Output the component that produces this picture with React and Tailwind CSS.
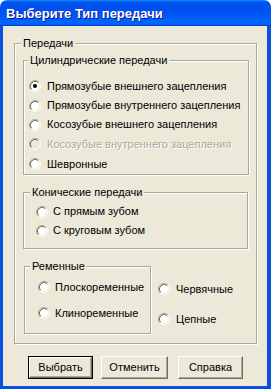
const FONT = "font-['Liberation_Sans',Arial,sans-serif]";

function Radio({ checked, disabled }) {
  return (
    <svg width="12" height="12" viewBox="0 0 12 12" className="shrink-0">
      <circle cx="6" cy="6" r="4.5" fill={disabled ? '#ECE9D8' : '#fff'} />
      <path d="M2.11 9.89 A5.5 5.5 0 0 1 9.89 2.11" fill="none" stroke="#ACA899" />
      <path d="M9.89 2.11 A5.5 5.5 0 0 1 2.11 9.89" fill="none" stroke="#fff" />
      <path d="M2.82 9.18 A4.5 4.5 0 0 1 9.18 2.82" fill="none" stroke="#716F64" />
      <path d="M9.18 2.82 A4.5 4.5 0 0 1 2.82 9.18" fill="none" stroke="#F1EFE2" />
      {checked && <circle cx="6" cy="6" r="2" fill="#000" />}
    </svg>
  );
}

function Option({ label, checked, disabled, gap = 'gap-[6px]', h = 'h-[20px]' }) {
  return (
    <div className={`flex items-center ${gap} ${h}`}>
      <Radio checked={checked} disabled={disabled} />
      <span className={`whitespace-nowrap ${disabled ? 'text-[#ACA899] [text-shadow:1px_1px_0_#fff]' : 'text-black'}`}>
        {label}
      </span>
    </div>
  );
}

function Group({ label, labelLeft, className, children }) {
  return (
    <div className={`relative border border-[#ACA899] shadow-[inset_1px_1px_0_#fff,1px_1px_0_#fff] ${className}`}>
      <span className={`absolute -top-[7px] ${labelLeft} bg-[#ECE9D8] px-[2px] leading-[13px] whitespace-nowrap`}>
        {label}
      </span>
      {children}
    </div>
  );
}

function Button({ label, isDefault, className }) {
  const inner = (
    <div className="flex h-full w-full items-center justify-center border border-t-white border-l-white border-r-[#716F64] border-b-[#716F64] bg-[#ECE9D8] shadow-[inset_-1px_-1px_0_#ACA899]">
      {label}
    </div>
  );
  if (isDefault) {
    return <div className={`h-[23px] border border-black ${className}`}>{inner}</div>;
  }
  return <div className={`h-[23px] ${className}`}>{inner}</div>;
}

export default function App() {
  return (
    <div className={`flex h-[389px] w-[271px] flex-col bg-white text-[11px] ${FONT}`}>
      {/* Заголовок */}
      <div className="flex h-[26px] shrink-0 items-center rounded-t-[7px] bg-[linear-gradient(180deg,#0997ff,#0053ee_8%,#0050ee_40%,#06f_88%,#06f_93%,#005bff_95%,#003dd7_96%,#003dd7)] pl-[6px] pt-[1px]">
        <span className="text-[13px] font-bold text-white [text-shadow:1px_1px_#0f1089]">Выберите Тип передачи</span>
      </div>

      {/* Тело окна */}
      <div className="flex flex-1 flex-col border-x-[3px] border-b-[3px] border-[#0a4fe0] border-r-4 bg-[#ECE9D8]">
        <Group label="Передачи" labelLeft="left-[6px]" className="ml-[11px] mt-[17px] h-[301px] w-[243px]">
          <Group
            label="Цилиндрические передачи"
            labelLeft="left-[4px]"
            className="ml-[8px] mt-[16px] h-[115px] w-[226px] pl-[5px] pt-[15px]"
          >
            <Option label="Прямозубые внешнего зацепления" checked />
            <Option label="Прямозубые внутреннего зацепления" h="h-[19px]" />
            <Option label="Косозубые внешнего зацепления" h="h-[19px]" />
            <Option label="Косозубые внутреннего зацепления" disabled />
            <Option label="Шевронные" />
          </Group>

          <Group
            label="Конические передачи"
            labelLeft="left-[6px]"
            className="ml-[8px] mt-[17px] h-[57px] w-[225px] pl-[12px] pt-[9px]"
          >
            <Option label="С прямым зубом" gap="gap-[5px]" h="h-[19px]" />
            <Option label="С круговым зубом" gap="gap-[5px]" h="h-[19px]" />
          </Group>

          <div className="mt-[17px] flex">
            <Group
              label="Ременные"
              labelLeft="left-[5px]"
              className="ml-[9px] h-[68px] w-[127px] pl-[13px] pt-[10px]"
            >
              <Option label="Плоскоременные" gap="gap-[5px]" />
              <div className="mt-[6px]">
                <Option label="Клиноременные" gap="gap-[5px]" />
              </div>
            </Group>
            <div className="ml-[7px] pt-[13px]">
              <Option label="Червячные" gap="gap-[6px]" />
              <div className="mt-[10px]">
                <Option label="Цепные" gap="gap-[6px]" />
              </div>
            </div>
          </div>
        </Group>

        {/* Кнопки */}
        <div className="mt-[12px] flex">
          <Button label="Выбрать" isDefault className="ml-[25px] w-[65px]" />
          <Button label="Отменить" className="ml-[8px] w-[67px]" />
          <Button label="Справка" className="ml-[10px] w-[65px]" />
        </div>
      </div>
    </div>
  );
}
